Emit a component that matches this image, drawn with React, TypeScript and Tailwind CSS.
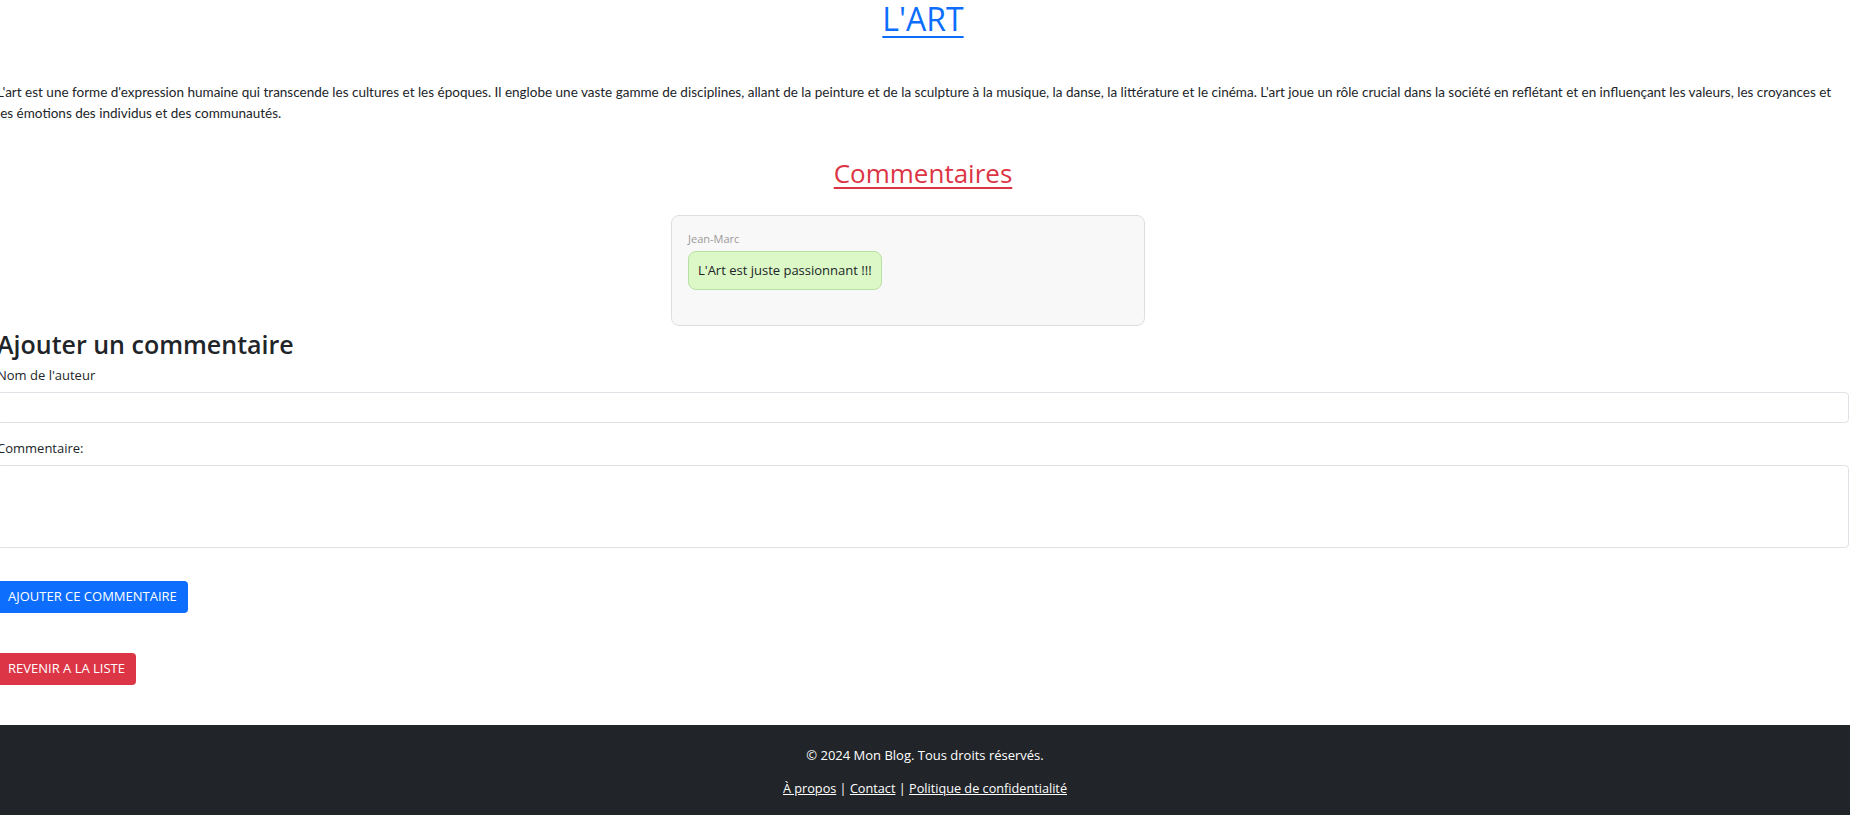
import React from 'react';

const font = { fontFamily: '"Open Sans", "Noto Sans", sans-serif' };

function CommentCard({ author, text }: { author: string; text: string }) {
  return (
    <div className="w-[474px] rounded-lg border border-[#dedede] bg-[#f8f8f8] px-4 pt-[16px] pb-[35px]">
      <p className="text-[11px] leading-[14px] text-[#9a9a9a]">{author}</p>
      <div className="mt-[5px] inline-block rounded-lg border border-[#b8e0a5] bg-[#dcf8c6] px-[9px] py-[9px] text-[13px] leading-[19px] text-[#212529]">
        {text}
      </div>
    </div>
  );
}

export default function App() {
  return (
    <div className="h-screen overflow-hidden bg-white text-[#212529]" style={font}>
      <div className="-ml-[3px] w-[1852px]">
        <h2 className="text-center text-[32px] leading-[38px]">
          <a href="#" className="text-[#0d6efd] underline decoration-2 underline-offset-[5px]">
            L'ART
          </a>
        </h2>

        <p className="mt-[44px] pr-[12px] font-['Lato',sans-serif] text-[13.5px] leading-[21px]">
          L'art est une forme d'expression humaine qui transcende les cultures et les époques. Il englobe une vaste
          gamme de disciplines, allant de la peinture et de la sculpture à la musique, la danse, la littérature et le
          cinéma. L'art joue un rôle crucial dans la société en reflétant et en influençant les valeurs, les croyances
          et les émotions des individus et des communautés.
        </p>

        <h3 className="mt-[32px] text-center text-[26px] leading-[34px]">
          <a href="#" className="text-[#dc3545] underline decoration-2 underline-offset-[4px]">
            Commentaires
          </a>
        </h3>

        <div className="mt-[25px] flex justify-center pr-[30px]">
          <CommentCard author="Jean-Marc" text="L'Art est juste passionnant !!!" />
        </div>

        <h4 className="mt-[4px] text-[25px] leading-[29px] font-semibold">Ajouter un commentaire</h4>

        <form className="flex flex-col">
          <label className="mt-[6px] text-[13px] leading-[21px]">Nom de l'auteur</label>
          <input
            type="text"
            className="mt-[6px] h-[31px] w-full rounded border border-[#dee2e6] px-2 text-sm outline-none"
          />
          <label className="mt-[15px] text-[13px] leading-[21px]">Commentaire:</label>
          <textarea className="mt-[6px] h-[83px] w-full resize-none rounded border border-[#dee2e6] px-2 text-sm outline-none" />
          <div className="mt-[33px]">
            <button
              type="button"
              className="h-[32px] rounded bg-[#0d6efd] px-[11px] text-[13px] uppercase text-white"
            >
              Ajouter ce commentaire
            </button>
          </div>
        </form>

        <div className="mt-[40px]">
          <button type="button" className="h-[32px] rounded bg-[#dc3545] px-[11px] text-[13px] uppercase text-white">
            Revenir a la liste
          </button>
        </div>
      </div>

      <footer className="mt-[40px] bg-[#212529] pt-[20px] pb-[40px] text-center text-[13px] text-white">
        <p className="leading-[21px]">© 2024 Mon Blog. Tous droits réservés.</p>
        <p className="mt-[12px] text-[12.7px] leading-[21px]">
          <a href="#" className="underline">À propos</a> | <a href="#" className="underline">Contact</a> |{' '}
          <a href="#" className="underline">Politique de confidentialité</a>
        </p>
      </footer>
    </div>
  );
}
